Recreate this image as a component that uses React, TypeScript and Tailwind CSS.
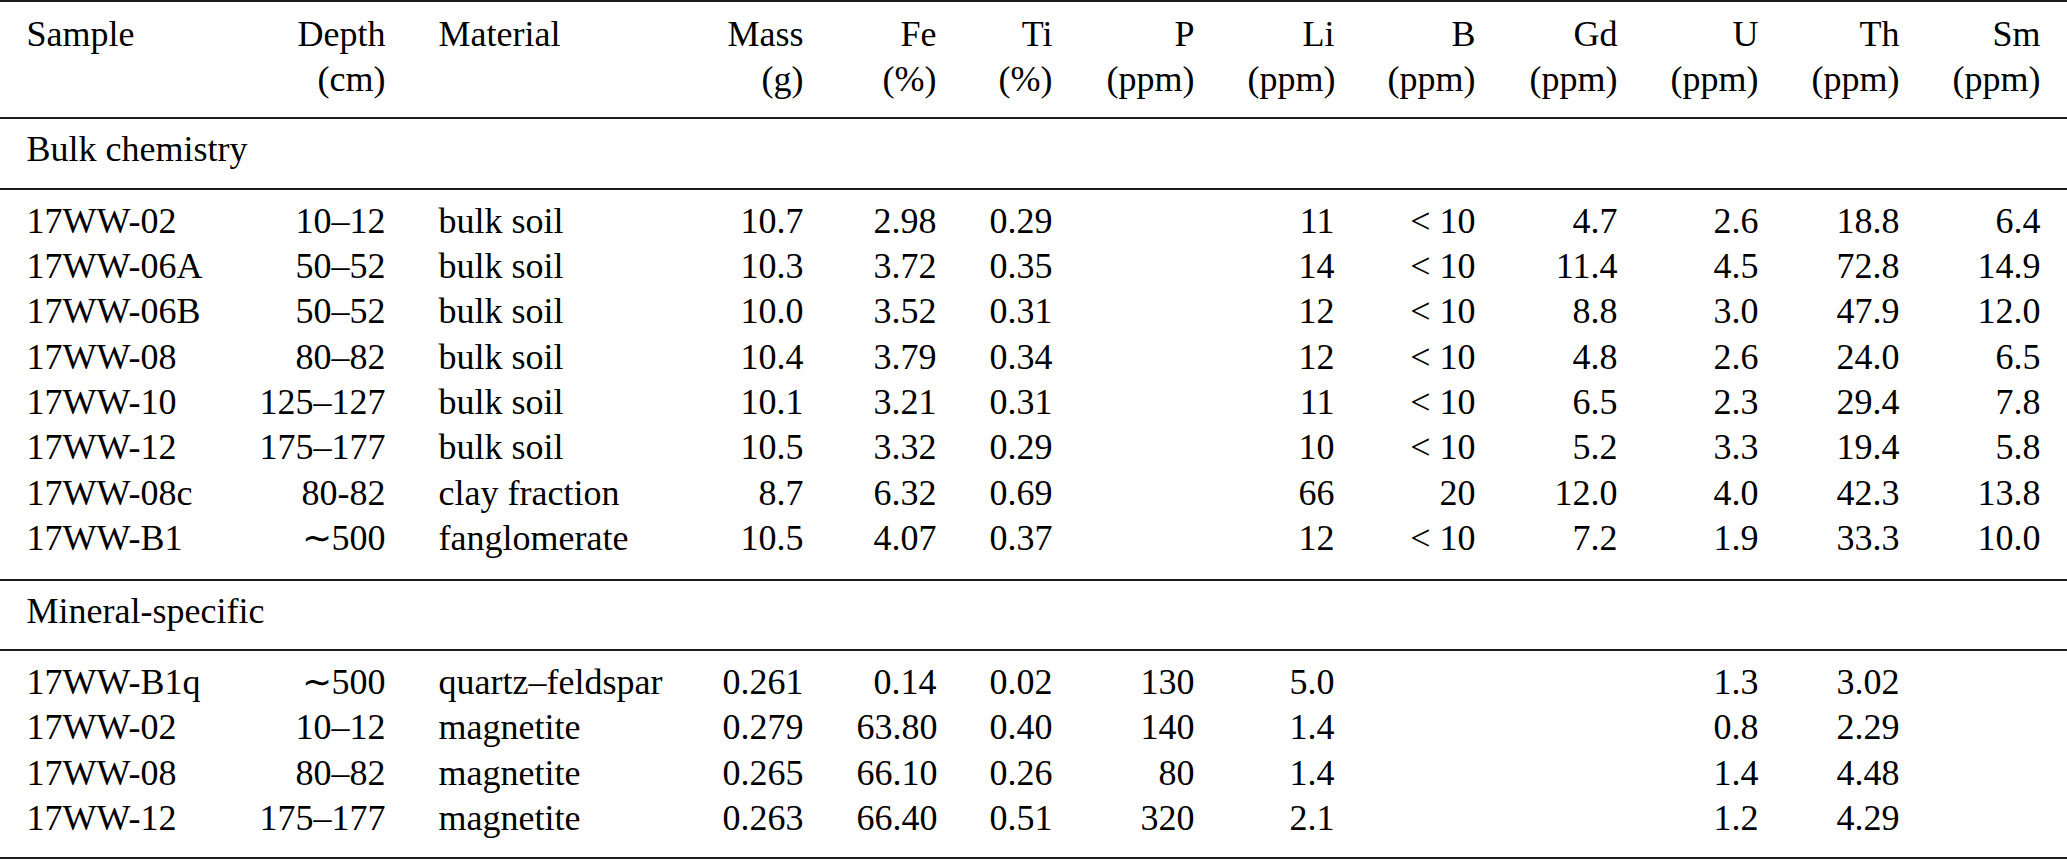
import React from "react";

const cols =
  "grid grid-cols-[232px_180px_284px_134px_133px_116px_142px_140px_141px_142px_141px_141px_141px]";

const headers: [string, string][] = [
  ["Sample", ""],
  ["Depth", "(cm)"],
  ["Material", ""],
  ["Mass", "(g)"],
  ["Fe", "(%)"],
  ["Ti", "(%)"],
  ["P", "(ppm)"],
  ["Li", "(ppm)"],
  ["B", "(ppm)"],
  ["Gd", "(ppm)"],
  ["U", "(ppm)"],
  ["Th", "(ppm)"],
  ["Sm", "(ppm)"],
];

const bulk: string[][] = [
  ["17WW-02", "10–12", "bulk soil", "10.7", "2.98", "0.29", "", "11", "< 10", "4.7", "2.6", "18.8", "6.4"],
  ["17WW-06A", "50–52", "bulk soil", "10.3", "3.72", "0.35", "", "14", "< 10", "11.4", "4.5", "72.8", "14.9"],
  ["17WW-06B", "50–52", "bulk soil", "10.0", "3.52", "0.31", "", "12", "< 10", "8.8", "3.0", "47.9", "12.0"],
  ["17WW-08", "80–82", "bulk soil", "10.4", "3.79", "0.34", "", "12", "< 10", "4.8", "2.6", "24.0", "6.5"],
  ["17WW-10", "125–127", "bulk soil", "10.1", "3.21", "0.31", "", "11", "< 10", "6.5", "2.3", "29.4", "7.8"],
  ["17WW-12", "175–177", "bulk soil", "10.5", "3.32", "0.29", "", "10", "< 10", "5.2", "3.3", "19.4", "5.8"],
  ["17WW-08c", "80-82", "clay fraction", "8.7", "6.32", "0.69", "", "66", "20", "12.0", "4.0", "42.3", "13.8"],
  ["17WW-B1", "∼500", "fanglomerate", "10.5", "4.07", "0.37", "", "12", "< 10", "7.2", "1.9", "33.3", "10.0"],
];

const mineral: string[][] = [
  ["17WW-B1q", "∼500", "quartz–feldspar", "0.261", "0.14", "0.02", "130", "5.0", "", "", "1.3", "3.02", ""],
  ["17WW-02", "10–12", "magnetite", "0.279", "63.80", "0.40", "140", "1.4", "", "", "0.8", "2.29", ""],
  ["17WW-08", "80–82", "magnetite", "0.265", "66.10", "0.26", "80", "1.4", "", "", "1.4", "4.48", ""],
  ["17WW-12", "175–177", "magnetite", "0.263", "66.40", "0.51", "320", "2.1", "", "", "1.2", "4.29", ""],
];

function T({ children }: { children: React.ReactNode }) {
  return <div className="font-['Liberation_Serif']">{children}</div>;
}

function Cell({ i, lines }: { i: number; lines: string[] }) {
  const left = i === 0 || i === 2;
  return (
    <div className={left ? "px-[26.5px] whitespace-nowrap text-left" : "px-[26.5px] whitespace-nowrap text-right"}>
      {lines.map((l, k) => (
        <T key={k}>{l === "" ? "\u00a0" : l}</T>
      ))}
    </div>
  );
}

function Rows({ rows }: { rows: string[][] }) {
  return (
    <>
      {rows.map((r, ri) =>
        r.map((c, ci) => <Cell key={`${ri}-${ci}`} i={ci} lines={[c]} />)
      )}
    </>
  );
}

export default function App() {
  return (
    <div className="w-[2067px] h-[860px] overflow-hidden bg-white text-black text-[36px] leading-[45.3px]">
      <div className={`${cols} border-t-2 border-b-2 border-[#1c1c1c] pt-[10px] pb-[14.5px]`}>
        {headers.map(([a, b], i) => (
          <Cell key={i} i={i} lines={b ? [a, b] : [a]} />
        ))}
      </div>
      <div className="border-b-2 border-[#1c1c1c] pt-[8px] pb-[16px] px-[26.5px]">
        <T>Bulk chemistry</T>
      </div>
      <div className={`${cols} border-b-2 border-[#1c1c1c] pt-[8.5px] pb-[17.5px]`}>
        <Rows rows={bulk} />
      </div>
      <div className="border-b-2 border-[#1c1c1c] pt-[8px] pb-[15px] px-[26.5px]">
        <T>Mineral-specific</T>
      </div>
      <div className={`${cols} border-b-2 border-[#1c1c1c] pt-[9px] pb-[16px]`}>
        <Rows rows={mineral} />
      </div>
    </div>
  );
}
